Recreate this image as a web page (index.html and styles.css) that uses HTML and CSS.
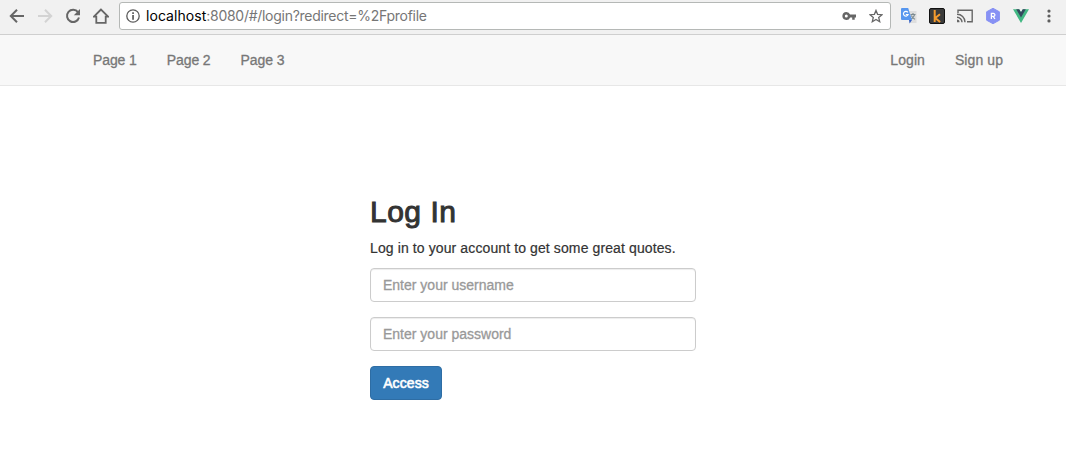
FILE: index.html
```html
<!DOCTYPE html>
<html lang="en">
<head>
<meta charset="utf-8">
<title>Log In</title>
<link rel="stylesheet" href="styles.css">
</head>
<body>
<header class="toolbar">
  <div class="controls">
    <svg class="icon" width="16" height="16" viewBox="0 0 16 16"><path d="M15 8H2M8 1.7 1.8 8 8 14.3" fill="none" stroke="#666" stroke-width="2"/></svg>
    <svg class="icon" width="16" height="16" viewBox="0 0 16 16"><path d="M1 8h13M8 1.7 14.2 8 8 14.3" fill="none" stroke="#d3d3d3" stroke-width="2"/></svg>
    <svg class="icon" width="16" height="16" viewBox="0 0 16 16"><path d="M13 4.2A6.1 6.1 0 1 0 14 9.5" fill="none" stroke="#666" stroke-width="2"/><path d="M15 1v6.2H8.8z" fill="#666"/></svg>
    <svg class="icon" width="16" height="16" viewBox="0 0 16 16"><path d="M8 1.5.9 8.7h2.4v6.1h9.4V8.7h2.4z" fill="none" stroke="#666" stroke-width="1.8"/></svg>
  </div>
  <div class="address">
    <svg class="icon" width="14" height="14" viewBox="0 0 14 14"><circle cx="7" cy="7" r="6.2" fill="none" stroke="#5b5b5b" stroke-width="1.3"/><path d="M6.2 3.2h1.7v1.7H6.2zM6.2 6h1.7v4.8H6.2z" fill="#5b5b5b"/></svg>
    <div class="url"><span class="host">localhost</span>:8080/#/login?redirect=%2Fprofile</div>
    <svg class="icon key" width="15" height="10" viewBox="0 0 15 10"><path d="M4.3.9a4 4 0 1 0 3.8 5.5h2.1v2.4h2.5V6.4H14V3.5H8.1A4 4 0 0 0 4.3.9zm0 2.5a1.5 1.5 0 1 1 0 3 1.5 1.5 0 0 1 0-3z" fill="#666" fill-rule="evenodd"/></svg>
    <svg class="icon" width="14" height="14" viewBox="0 0 14 14"><path d="m7 1.4 1.6 3.9 4.4.4-3.3 2.8 1 4.2L7 10.5l-3.7 2.2 1-4.2L1 5.7l4.4-.4z" fill="none" stroke="#666" stroke-width="1.3"/></svg>
  </div>
  <div class="extensions">
    <svg class="icon" width="16" height="16" viewBox="0 0 16 16"><path d="M6 3h9.5v12H9z" fill="#dedede"/><path d="M9.5 6.5h5M12 5v1.5M13.6 6.5c-.5 2.7-2.3 4-4.1 5M10.3 7.4c1 2 2 3 3.7 4" fill="none" stroke="#7d8b90" stroke-width="1.1"/><path d="M1 0h6.2L11 12H1a1 1 0 0 1-1-1V1a1 1 0 0 1 1-1z" fill="#5797ef"/><path d="M8 12h3l-2.4 3.4z" fill="#315fc4"/><path d="M6.8 4.3A2.4 2.4 0 1 0 7.1 6.5H4.8" fill="none" stroke="#fff" stroke-width="1.2"/></svg>
    <svg class="icon" width="16" height="16" viewBox="0 0 16 16"><rect x=".5" y=".5" width="15" height="15" rx="1.5" fill="#3b3b3b" stroke="#111"/><path d="M5.7 2v12M11 6.2 6.2 10l4.9 4" fill="none" stroke="#f59b2d" stroke-width="2"/></svg>
    <svg class="icon" width="16" height="14" viewBox="0 0 16 14"><path d="M1 4V1.2h14.2v11.5H10" fill="none" stroke="#666" stroke-width="1.4"/><path d="M0 5.3A7.9 7.9 0 0 1 8 13.2M0 8.2a5 5 0 0 1 5 5" fill="none" stroke="#666" stroke-width="1.4"/><path d="M0 10.6A2.5 2.5 0 0 1 2.5 13.2H0z" fill="#666"/></svg>
    <svg class="icon" width="16" height="16" viewBox="0 0 16 16"><path d="m8 .3 6.4 3.5v8.4L8 15.7l-6.4-3.5V3.8z" fill="#8791f4" stroke="#8791f4" stroke-width="1" stroke-linejoin="round"/><path d="M6.4 11V5.4h2a1.4 1.4 0 0 1 0 3h-2M8.2 8.3l1.7 2.7" fill="none" stroke="#fff" stroke-width="1.3"/></svg>
    <svg class="icon" width="16" height="14" viewBox="0 0 16 14"><path d="M0 .2h6.2L8 3.3 9.8.2H16L8 14z" fill="#42b883"/><path d="M3.2.2h3L8 3.3 9.8.2h3L8 8.5z" fill="#35495e"/></svg>
    <svg class="icon" width="16" height="14" viewBox="0 0 16 14"><g fill="#5d5d5d"><circle cx="8" cy="2.1" r="1.6"/><circle cx="8" cy="7" r="1.6"/><circle cx="8" cy="11.9" r="1.6"/></g></svg>
  </div>
</header>
<nav class="navbar">
  <div class="links"><a>Page 1</a><a>Page 2</a><a>Page 3</a></div>
  <div class="links account"><a class="login">Login</a><a class="signup">Sign up</a></div>
</nav>
<main class="login-form">
  <h1 class="title">Log In</h1>
  <p class="intro">Log in to your account to get some great quotes.</p>
  <input class="field" type="text" placeholder="Enter your username">
  <input class="field" type="password" placeholder="Enter your password">
  <button class="submit">Access</button>
</main>
</body>
</html>
```
FILE: styles.css
```css
* { box-sizing: border-box; }
body { margin: 0; height: 451px; overflow: hidden; background: #fff; color: #333; font: 14px/20px "Liberation Sans", Arial, sans-serif; }
.icon { display: block; flex: none; }
.toolbar { display: flex; align-items: flex-start; height: 35px; padding: 2px 9px 0; background: #f1f1f1; border-bottom: 1px solid #cfcfcf; }
.controls { display: flex; align-items: center; gap: 12px; width: 110px; height: 28px; }
.address { display: flex; align-items: center; width: 772px; height: 28px; padding: 0 7px 0 6px; background: #fff; border: 1px solid #b5b8b6; border-radius: 3px; }
.url { flex: 1; margin-left: 6px; color: #767676; font: 14px/20px Inter, sans-serif; letter-spacing: -.28px; white-space: nowrap; }
.host { color: #000; letter-spacing: .05px; }
.key { margin-right: 12px; }
.extensions { display: flex; align-items: center; gap: 12px; height: 28px; padding-left: 10px; }
.navbar { display: flex; justify-content: space-between; align-items: center; height: 51px; padding: 0 63px 0 93px; background: #f8f8f8; border-bottom: 1px solid #e7e7e7; color: #777; -webkit-text-stroke: .3px currentColor; }
.links { display: flex; gap: 30px; letter-spacing: -.1px; }
.account { gap: 30px; letter-spacing: .08px; }
.login-form { width: 326px; margin: 109px 0 0 370px; }
.title { margin: 0; font-size: 30px; line-height: 33px; font-weight: 400; letter-spacing: .5px; -webkit-text-stroke: 1px currentColor; }
.intro { margin: 10px 0; letter-spacing: .11px; -webkit-text-stroke: .2px currentColor; }
.field { display: block; width: 100%; height: 34px; margin: 0 0 15px; padding: 6px 12px; font: inherit; background: #fff; border: 1px solid #ccc; border-radius: 4px; box-shadow: inset 0 1px 1px rgba(0, 0, 0, .075); -webkit-text-stroke: .3px currentColor; }
.field::placeholder { color: #999; opacity: 1; }
.submit { display: block; width: 72px; height: 34px; padding: 6px 12px; color: #fff; background: #337ab7; border: 1px solid #2e6da4; border-radius: 4px; font: inherit; letter-spacing: .1px; -webkit-text-stroke: .6px currentColor; }
```
